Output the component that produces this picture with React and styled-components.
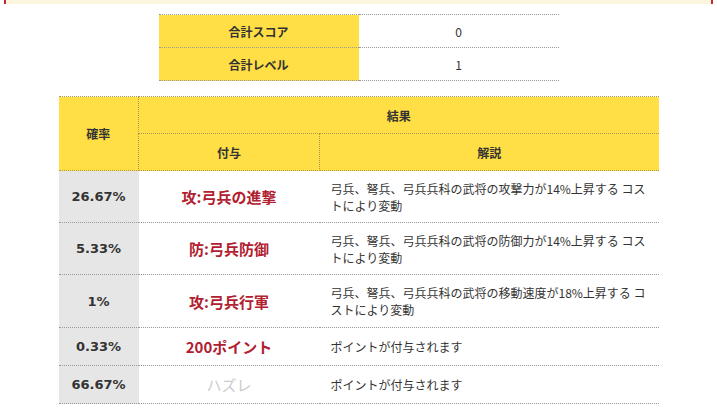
import React from 'react';
import styled, { createGlobalStyle } from 'styled-components';

const GlobalStyle = createGlobalStyle`
  body {
    margin: 0;
    background: #ffffff;
    font-family: 'Noto Sans CJK JP', 'Noto Sans', sans-serif;
    color: #333333;
  }
`;

const TopBar = styled.div`
  height: 4px;
  margin: 0 4px;
  background-color: #fdf6df;
  border-left: 2px solid #c3283a;
  border-right: 2px solid #c3283a;
`;

const Page = styled.div`
  display: flex;
  flex-direction: column;
  align-items: center;
  padding-top: 10px;
`;

const SummaryTable = styled.table`
  width: 400px;
  border-collapse: collapse;
  font-size: 12px;
  margin-bottom: 15px;
`;

const SummaryRow = styled.tr`
  height: 33px;
  border-top: 1px dotted #999999;
  border-bottom: 1px dotted #999999;
`;

const SummaryLabel = styled.th`
  width: 200px;
  background-color: #ffde46;
  font-weight: bold;
  text-align: center;
  padding: 0;
`;

const SummaryValue = styled.td`
  text-align: center;
  padding: 0;
`;

const ResultTable = styled.table`
  width: 600px;
  border-collapse: collapse;
  font-size: 12px;
`;

const HeadRow = styled.tr`
  height: 37px;
`;

const HeadCell = styled.th`
  background-color: #ffde46;
  font-weight: bold;
  text-align: center;
  padding: 0;
  border: 1px dotted #a89a52;
  border-left: ${(p) => (p.$edge === 'left' ? 'none' : '1px dotted #a89a52')};
  border-right: ${(p) => (p.$edge === 'right' ? 'none' : '1px dotted #a89a52')};
`;

const BodyRow = styled.tr`
  height: ${(p) => p.$height}px;
  border-bottom: 1px dotted #999999;
`;

const RateCell = styled.td`
  width: 80px;
  background-color: #e6e6e6;
  font-family: 'DejaVu Sans', Verdana, sans-serif;
  font-weight: bold;
  font-size: 13px;
  text-align: center;
  padding: 0;
`;

const BonusCell = styled.td`
  width: 181px;
  text-align: center;
  font-weight: bold;
  font-size: 15px;
  color: ${(p) => (p.$miss ? '#cccccc' : '#b1202f')};
  font-weight: ${(p) => (p.$miss ? 'normal' : 'bold')};
  padding: 0;
`;

const DescCell = styled.td`
  text-align: left;
  padding: 0 12px 0 11px;
  line-height: 17px;
`;

const summary = [
  { label: '合計スコア', value: '0' },
  { label: '合計レベル', value: '1' },
];

const results = [
  { rate: '26.67%', bonus: '攻:弓兵の進撃', desc: '弓兵、弩兵、弓兵兵科の武将の攻撃力が14%上昇する コストにより変動', height: 52 },
  { rate: '5.33%', bonus: '防:弓兵防御', desc: '弓兵、弩兵、弓兵兵科の武将の防御力が14%上昇する コストにより変動', height: 52 },
  { rate: '1%', bonus: '攻:弓兵行軍', desc: '弓兵、弩兵、弓兵兵科の武将の移動速度が18%上昇する コストにより変動', height: 53 },
  { rate: '0.33%', bonus: '200ポイント', desc: 'ポイントが付与されます', height: 38 },
  { rate: '66.67%', bonus: 'ハズレ', desc: 'ポイントが付与されます', height: 38, miss: true },
];

const App = () => {
  return (
    <>
      <GlobalStyle />
      <TopBar />
      <Page>
        <SummaryTable>
          <tbody>
            {summary.map((s) => (
              <SummaryRow key={s.label}>
                <SummaryLabel>{s.label}</SummaryLabel>
                <SummaryValue>{s.value}</SummaryValue>
              </SummaryRow>
            ))}
          </tbody>
        </SummaryTable>

        <ResultTable>
          <thead>
            <HeadRow>
              <HeadCell rowSpan={2} $edge="left">確率</HeadCell>
              <HeadCell colSpan={2} $edge="right">結果</HeadCell>
            </HeadRow>
            <HeadRow>
              <HeadCell>付与</HeadCell>
              <HeadCell $edge="right">解説</HeadCell>
            </HeadRow>
          </thead>
          <tbody>
            {results.map((r) => (
              <BodyRow key={r.rate} $height={r.height}>
                <RateCell>{r.rate}</RateCell>
                <BonusCell $miss={r.miss}>{r.bonus}</BonusCell>
                <DescCell>{r.desc}</DescCell>
              </BodyRow>
            ))}
          </tbody>
        </ResultTable>
      </Page>
    </>
  );
};

export default App;
